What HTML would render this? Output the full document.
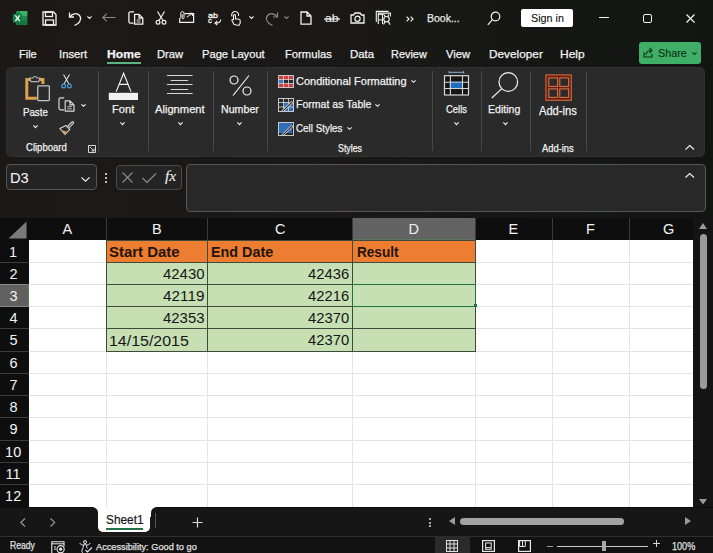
<!DOCTYPE html>
<html><head><meta charset="utf-8"><style>
html,body{margin:0;padding:0;}
body{width:713px;height:553px;overflow:hidden;position:relative;background:#1a1917;font-family:"Liberation Sans",sans-serif;}
svg{overflow:visible}
</style></head><body>
<div style="position:absolute;left:0px;top:0px;width:713px;height:218px;background:linear-gradient(90deg,#1c1815 0%,#1a1918 45%,#161715 75%,#121511 100%);"></div>
<svg style="position:absolute;left:12px;top:10px;" width="17" height="16" viewBox="0 0 17 16"><rect x="4" y="1" width="11.3" height="14.1" rx="1" fill="#1d8a4e"/>
<rect x="8" y="1" width="7.3" height="5" fill="#36b06c"/>
<rect x="4" y="10.5" width="11.3" height="4.6" fill="#17743f"/>
<rect x="0.8" y="3.8" width="9.1" height="8.9" rx="0.8" fill="#157a44"/>
<path d="M3.3 5.4 L7.7 11 M7.7 5.4 L3.3 11" stroke="#f4f4f4" stroke-width="1.3"/></svg>
<svg style="position:absolute;left:42px;top:11px;" width="15" height="15" viewBox="0 0 15 15"><path d="M1 1 H11.5 L14 3.5 V14 H1 Z" fill="none" stroke="#f2f2f2" stroke-width="1.3"/>
<rect x="3.5" y="1" width="7" height="4.5" fill="none" stroke="#f2f2f2" stroke-width="1.3"/>
<rect x="3.5" y="9" width="8" height="5" fill="none" stroke="#f2f2f2" stroke-width="1.3"/></svg>
<svg style="position:absolute;left:68px;top:11px;" width="14" height="15" viewBox="0 0 14 15"><path d="M1.5 1.5 V6 H6" fill="none" stroke="#f2f2f2" stroke-width="1.3"/>
<path d="M1.8 5.8 C4 2.5 9 1.5 11.5 4.5 C13.5 7 12.5 10 10 12.5 L6.5 14.5" fill="none" stroke="#f2f2f2" stroke-width="1.3"/></svg>
<svg style="position:absolute;left:87px;top:16px;" width="5" height="2.8" viewBox="0 0 5 2.8"><path d="M0.4 0.4 L2.5 2.5 L4.6 0.4" fill="none" stroke="#f2f2f2" stroke-width="1.1"/></svg>
<svg style="position:absolute;left:102px;top:13px;" width="14" height="9" viewBox="0 0 14 9"><path d="M0.8 4.5 H13.5 M4.8 0.7 L0.8 4.5 L4.8 8.3" fill="none" stroke="#8a8a8a" stroke-width="1.1"/></svg>
<svg style="position:absolute;left:127.5px;top:11px;" width="16" height="14" viewBox="0 0 16 14"><path d="M6 0.8 H2.4 A1.5 1.5 0 0 0 0.9 2.3 V10.7 A1.5 1.5 0 0 0 2.4 12.2 H5.5" fill="none" stroke="#f2f2f2" stroke-width="1.3"/>
<path d="M6.6 3.4 H11 L14.8 7.2 V13.2 H6.6 Z M11 3.4 V7.2 H14.8" fill="none" stroke="#f2f2f2" stroke-width="1.3" stroke-linejoin="round"/>
<path d="M8.6 9 H12.6 M8.6 11 H12.6" stroke="#f2f2f2" stroke-width="0.9"/></svg>
<svg style="position:absolute;left:155px;top:11px;" width="12" height="14" viewBox="0 0 12 14"><path d="M2.5 0.5 L8 9.5 M9.5 0.5 L4 9.5" stroke="#f2f2f2" stroke-width="1.2"/>
<circle cx="3" cy="11.3" r="1.9" fill="none" stroke="#f2f2f2" stroke-width="1.2"/>
<circle cx="9" cy="11.3" r="1.9" fill="none" stroke="#f2f2f2" stroke-width="1.2"/></svg>
<svg style="position:absolute;left:179px;top:11px;" width="16" height="13" viewBox="0 0 16 13"><path d="M5.5 2.6 H14.6 V11.3 H0.7 V7" fill="none" stroke="#f2f2f2" stroke-width="1.2"/>
<path d="M1.8 7.2 V2.2 A1.6 1.6 0 0 1 5 2.2 V6.8 A0.9 0.9 0 0 1 3.2 6.8 V3.2" fill="none" stroke="#f2f2f2" stroke-width="1"/>
<path d="M7.8 6.2 L13.2 2.4 M10.5 2.3 H13.4 V5" fill="none" stroke="#f2f2f2" stroke-width="1"/></svg>
<div style="position:absolute;left:207.90px;top:11.65px;white-space:pre;line-height:1;font-family:'Liberation Sans', sans-serif;font-size:7.5px;font-weight:400;font-style:normal;color:#f2f2f2;transform:scaleX(1.1993);transform-origin:0 0;-webkit-text-stroke:0.3px #f2f2f2;">ab</div>
<div style="position:absolute;left:207.90px;top:17.15px;white-space:pre;line-height:1;font-family:'Liberation Sans', sans-serif;font-size:7.5px;font-weight:400;font-style:normal;color:#f2f2f2;transform:scaleX(1.0250);transform-origin:0 0;-webkit-text-stroke:0.3px #f2f2f2;">c</div>
<svg style="position:absolute;left:213.5px;top:18.5px;" width="8" height="6" viewBox="0 0 8 6"><path d="M6.8 0.5 C6.8 3 5.5 4.2 1.2 4.2 M3.3 2 L1 4.2 L3.3 6" fill="none" stroke="#f2f2f2" stroke-width="1.1"/></svg>
<svg style="position:absolute;left:230px;top:11px;" width="11" height="15" viewBox="0 0 11 15"><path d="M2 5.5 A3.5 3.5 0 1 1 8.5 5" fill="none" stroke="#f2f2f2" stroke-width="1.1"/>
<path d="M4 13.5 L2 9.5 C1.6 8.5 3 8 3.5 9 V4.5 A1 1 0 0 1 5.5 4.5 V8 H8 C9.5 8 10.2 9 10.2 10 V12 L9 14.5 Z" fill="none" stroke="#f2f2f2" stroke-width="1.1"/></svg>
<svg style="position:absolute;left:249px;top:16px;" width="5" height="2.8" viewBox="0 0 5 2.8"><path d="M0.4 0.4 L2.5 2.5 L4.6 0.4" fill="none" stroke="#f2f2f2" stroke-width="1.1"/></svg>
<svg style="position:absolute;left:265px;top:11px;" width="14" height="15" viewBox="0 0 14 15"><path d="M12.5 1.5 V6 H8" fill="none" stroke="#8a8a8a" stroke-width="1.2"/>
<path d="M12.2 5.8 C10 2.5 5 1.5 2.5 4.5 C0.5 7 1.5 10 4 12.5 L7.5 14.5" fill="none" stroke="#8a8a8a" stroke-width="1.2"/></svg>
<svg style="position:absolute;left:284px;top:16px;" width="5" height="2.8" viewBox="0 0 5 2.8"><path d="M0.4 0.4 L2.5 2.5 L4.6 0.4" fill="none" stroke="#8a8a8a" stroke-width="1.1"/></svg>
<svg style="position:absolute;left:300px;top:11px;" width="12" height="14" viewBox="0 0 12 14"><path d="M1 1 H7 L11 5 V13.2 H1 Z M7 1 V5 H11" fill="none" stroke="#f2f2f2" stroke-width="1.3"/></svg>
<div style="position:absolute;left:324.50px;top:13.19px;white-space:pre;line-height:1;font-family:'Liberation Sans', sans-serif;font-size:11px;font-weight:400;font-style:normal;color:#f2f2f2;transform:scaleX(1.1141);transform-origin:0 0;-webkit-text-stroke:0.1px #f2f2f2;">ab</div>
<svg style="position:absolute;left:323.5px;top:17.5px;" width="16" height="2" viewBox="0 0 16 2"><path d="M0 1 H16" stroke="#f2f2f2" stroke-width="1.2"/></svg>
<svg style="position:absolute;left:350px;top:12px;" width="15" height="12" viewBox="0 0 15 12"><path d="M1 3 H3.5 L5 1 H10 L11.5 3 H14 V11 H1 Z" fill="none" stroke="#f2f2f2" stroke-width="1.3"/>
<circle cx="7.5" cy="6.8" r="2.6" fill="none" stroke="#f2f2f2" stroke-width="1.2"/></svg>
<svg style="position:absolute;left:375px;top:10px;" width="17" height="16" viewBox="0 0 17 16"><path d="M1.3 12 V1.4 H13.6" fill="none" stroke="#f2f2f2" stroke-width="1.1"/>
<path d="M3.3 14 V3.1 H15.4 V6.5" fill="none" stroke="#f2f2f2" stroke-width="1.1"/>
<path d="M3.3 4.6 H8.8 M7.5 4.6 V14 M3.3 9.9 H7.5" fill="none" stroke="#f2f2f2" stroke-width="1"/>
<circle cx="11.5" cy="9.2" r="2.7" fill="none" stroke="#f2f2f2" stroke-width="1.1"/>
<path d="M9.2 4.6 L10.2 6.7 M13.8 4.6 L12.8 6.7 M8.6 14.6 L10 11.6 M15.2 14.6 L13.2 11.6" stroke="#f2f2f2" stroke-width="1.1"/></svg>
<svg style="position:absolute;left:406px;top:16px;" width="8" height="6" viewBox="0 0 8 6"><path d="M0.6 0.6 L3 3 L0.6 5.4 M4.6 0.6 L7 3 L4.6 5.4" fill="none" stroke="#f2f2f2" stroke-width="1.1"/></svg>
<div style="position:absolute;left:427.00px;top:13.27px;white-space:pre;line-height:1;font-family:'Liberation Sans', sans-serif;font-size:11.5px;font-weight:400;font-style:normal;color:#e8e8e8;transform:scaleX(0.9129);transform-origin:0 0;-webkit-text-stroke:0.25px #e8e8e8;">Book...</div>
<svg style="position:absolute;left:487px;top:11px;" width="14" height="15" viewBox="0 0 14 15"><circle cx="8.5" cy="5.5" r="4.3" fill="none" stroke="#f2f2f2" stroke-width="1.2"/>
<path d="M5.5 8.7 L0.8 13.8" stroke="#f2f2f2" stroke-width="1.2"/></svg>
<div style="position:absolute;left:521px;top:9px;width:52px;height:18px;background:#ffffff;border-radius:2px"></div>
<div style="position:absolute;left:530.70px;top:13.27px;white-space:pre;line-height:1;font-family:'Liberation Sans', sans-serif;font-size:11.5px;font-weight:400;font-style:normal;color:#111;transform:scaleX(0.9377);transform-origin:0 0;-webkit-text-stroke:0.1px #111;">Sign in</div>
<div style="position:absolute;left:598.5px;top:17px;width:10.5px;height:1.2px;background:#f2f2f2;"></div>
<div style="position:absolute;left:642.5px;top:13.5px;width:9.5px;height:9.5px;background:transparent;border:1.2px solid #f2f2f2;border-radius:2px;box-sizing:border-box"></div>
<svg style="position:absolute;left:686px;top:13.5px;" width="9" height="9" viewBox="0 0 9 9"><path d="M0.5 0.5 L8.5 8.5 M8.5 0.5 L0.5 8.5" stroke="#f2f2f2" stroke-width="1.2"/></svg>
<div style="position:absolute;left:18.50px;top:48.67px;white-space:pre;line-height:1;font-family:'Liberation Sans', sans-serif;font-size:11.5px;font-weight:400;font-style:normal;color:#f2f2f2;transform:scaleX(0.9540);transform-origin:0 0;-webkit-text-stroke:0.25px #f2f2f2;">File</div>
<div style="position:absolute;left:59.42px;top:48.67px;white-space:pre;line-height:1;font-family:'Liberation Sans', sans-serif;font-size:11.5px;font-weight:400;font-style:normal;color:#f2f2f2;transform:scaleX(0.9802);transform-origin:0 0;-webkit-text-stroke:0.25px #f2f2f2;">Insert</div>
<div style="position:absolute;left:107.30px;top:48.67px;white-space:pre;line-height:1;font-family:'Liberation Sans', sans-serif;font-size:11.5px;font-weight:700;font-style:normal;color:#f2f2f2;transform:scaleX(1.0521);transform-origin:0 0;-webkit-text-stroke:0.25px #f2f2f2;">Home</div>
<div style="position:absolute;left:107px;top:62.3px;width:33.5px;height:1.6px;background:#5eb37e;"></div>
<div style="position:absolute;left:157.00px;top:48.67px;white-space:pre;line-height:1;font-family:'Liberation Sans', sans-serif;font-size:11.5px;font-weight:400;font-style:normal;color:#f2f2f2;transform:scaleX(0.9735);transform-origin:0 0;-webkit-text-stroke:0.25px #f2f2f2;">Draw</div>
<div style="position:absolute;left:202.00px;top:48.67px;white-space:pre;line-height:1;font-family:'Liberation Sans', sans-serif;font-size:11.5px;font-weight:400;font-style:normal;color:#f2f2f2;transform:scaleX(0.9712);transform-origin:0 0;-webkit-text-stroke:0.25px #f2f2f2;">Page Layout</div>
<div style="position:absolute;left:285.00px;top:48.67px;white-space:pre;line-height:1;font-family:'Liberation Sans', sans-serif;font-size:11.5px;font-weight:400;font-style:normal;color:#f2f2f2;transform:scaleX(0.9756);transform-origin:0 0;-webkit-text-stroke:0.25px #f2f2f2;">Formulas</div>
<div style="position:absolute;left:349.70px;top:48.67px;white-space:pre;line-height:1;font-family:'Liberation Sans', sans-serif;font-size:11.5px;font-weight:400;font-style:normal;color:#f2f2f2;transform:scaleX(0.9921);transform-origin:0 0;-webkit-text-stroke:0.25px #f2f2f2;">Data</div>
<div style="position:absolute;left:391.00px;top:48.67px;white-space:pre;line-height:1;font-family:'Liberation Sans', sans-serif;font-size:11.5px;font-weight:400;font-style:normal;color:#f2f2f2;transform:scaleX(0.9505);transform-origin:0 0;-webkit-text-stroke:0.25px #f2f2f2;">Review</div>
<div style="position:absolute;left:445.70px;top:48.67px;white-space:pre;line-height:1;font-family:'Liberation Sans', sans-serif;font-size:11.5px;font-weight:400;font-style:normal;color:#f2f2f2;transform:scaleX(0.9719);transform-origin:0 0;-webkit-text-stroke:0.25px #f2f2f2;">View</div>
<div style="position:absolute;left:488.60px;top:48.67px;white-space:pre;line-height:1;font-family:'Liberation Sans', sans-serif;font-size:11.5px;font-weight:400;font-style:normal;color:#f2f2f2;transform:scaleX(1.0268);transform-origin:0 0;-webkit-text-stroke:0.25px #f2f2f2;">Developer</div>
<div style="position:absolute;left:560.30px;top:48.67px;white-space:pre;line-height:1;font-family:'Liberation Sans', sans-serif;font-size:11.5px;font-weight:400;font-style:normal;color:#f2f2f2;transform:scaleX(1.0406);transform-origin:0 0;-webkit-text-stroke:0.25px #f2f2f2;">Help</div>
<div style="position:absolute;left:639px;top:42px;width:62px;height:22px;background:#3fae66;border-radius:3px"></div>
<svg style="position:absolute;left:643px;top:47px;" width="10" height="11" viewBox="0 0 10 11"><path d="M1 5 V10 H9 V7" fill="none" stroke="#0b2e17" stroke-width="1.1"/>
<path d="M3 8 C3 5 5 3.5 8 3.5 M6.5 1 L9 3.5 L6.5 6" fill="none" stroke="#0b2e17" stroke-width="1.1"/></svg>
<div style="position:absolute;left:658.00px;top:47.77px;white-space:pre;line-height:1;font-family:'Liberation Sans', sans-serif;font-size:11.5px;font-weight:400;font-style:normal;color:#0b2e17;transform:scaleX(0.9409);transform-origin:0 0;-webkit-text-stroke:0.1px #0b2e17;">Share</div>
<svg style="position:absolute;left:692px;top:52px;" width="5" height="2.6" viewBox="0 0 5 2.6"><path d="M0.4 0.4 L2.5 2.3000000000000003 L4.6 0.4" fill="none" stroke="#0b2e17" stroke-width="1.1"/></svg>
<div style="position:absolute;left:6px;top:67px;width:699px;height:90px;background:#2a2a2a;border-radius:6px;box-shadow:inset 0 0 0 1px #313131"></div>
<div style="position:absolute;left:98px;top:71px;width:1px;height:80px;background:#474747;"></div>
<div style="position:absolute;left:147.5px;top:71px;width:1px;height:80px;background:#474747;"></div>
<div style="position:absolute;left:212.5px;top:71px;width:1px;height:80px;background:#474747;"></div>
<div style="position:absolute;left:267px;top:71px;width:1px;height:80px;background:#474747;"></div>
<div style="position:absolute;left:432px;top:71px;width:1px;height:80px;background:#474747;"></div>
<div style="position:absolute;left:480.5px;top:71px;width:1px;height:80px;background:#474747;"></div>
<div style="position:absolute;left:529.5px;top:71px;width:1px;height:80px;background:#474747;"></div>
<div style="position:absolute;left:586px;top:71px;width:1px;height:80px;background:#474747;"></div>
<svg style="position:absolute;left:24px;top:73px;" width="28" height="30" viewBox="0 0 28 30"><path d="M12.8 25.2 H2.8 V6.4 H18.9 V10.9" fill="none" stroke="#dfa24c" stroke-width="3" stroke-linejoin="miter"/>
<path d="M5.8 5 H9 A2.1 2.1 0 0 1 13 5 H16 L14.8 8.6 H7 Z" fill="#2a2a2a" stroke="#b8b8b8" stroke-width="1.1"/>
<rect x="13.75" y="12.85" width="11.6" height="14.8" rx="0.8" fill="#2a2a2a" stroke="#c4c4c4" stroke-width="1.3"/></svg>
<div style="position:absolute;left:22.60px;top:106.69px;white-space:pre;line-height:1;font-family:'Liberation Sans', sans-serif;font-size:11px;font-weight:400;font-style:normal;color:#f2f2f2;transform:scaleX(0.8818);transform-origin:0 0;-webkit-text-stroke:0.25px #f2f2f2;">Paste</div>
<svg style="position:absolute;left:32.5px;top:124.5px;" width="5" height="3" viewBox="0 0 5 3"><path d="M0.4 0.4 L2.5 2.7 L4.6 0.4" fill="none" stroke="#f2f2f2" stroke-width="1.1"/></svg>
<svg style="position:absolute;left:61px;top:74px;" width="11" height="15" viewBox="0 0 11 15"><path d="M2.5 0.5 L8 10 M8.5 0.5 L3 10" stroke="#d8d8d8" stroke-width="1.1"/>
<circle cx="2.6" cy="12" r="1.9" fill="none" stroke="#4a9fe0" stroke-width="1.2"/>
<circle cx="8.4" cy="12" r="1.9" fill="none" stroke="#4a9fe0" stroke-width="1.2"/></svg>
<svg style="position:absolute;left:58px;top:97px;" width="17" height="16" viewBox="0 0 17 16"><path d="M6.2 0.8 H2.5 A1.6 1.6 0 0 0 1 2.4 V11.2 A1.6 1.6 0 0 0 2.5 12.8 H6" fill="none" stroke="#d8d8d8" stroke-width="1.2"/>
<path d="M7.2 3.9 H12 L16 7.9 V14.2 H7.2 Z M12 3.9 V7.9 H16" fill="none" stroke="#d8d8d8" stroke-width="1.2" stroke-linejoin="round"/>
<path d="M9.3 9.7 H13.8 M9.3 11.8 H13.8" stroke="#d8d8d8" stroke-width="0.9"/></svg>
<svg style="position:absolute;left:81px;top:104px;" width="5" height="2.5" viewBox="0 0 5 2.5"><path d="M0.4 0.4 L2.5 2.2 L4.6 0.4" fill="none" stroke="#f2f2f2" stroke-width="1.1"/></svg>
<svg style="position:absolute;left:59px;top:120px;" width="16" height="15" viewBox="0 0 16 15"><path d="M8.5 6.5 L13 2 C13.8 1.2 15.2 2.4 14.4 3.3 L10 7.8" fill="none" stroke="#d8d8d8" stroke-width="1.1"/>
<path d="M7 5.5 L10.8 9.3 L6 14.5 L0.8 8.5 Z" fill="#2a2a2a" stroke="#d8d8d8" stroke-width="1.1" stroke-linejoin="round"/>
<path d="M3.5 10.5 L7.5 11.5 L6 14 L1.2 8.8 Z" fill="#e3a54c"/></svg>
<div style="position:absolute;left:26.30px;top:141.61px;white-space:pre;line-height:1;font-family:'Liberation Sans', sans-serif;font-size:10.5px;font-weight:400;font-style:normal;color:#f2f2f2;transform:scaleX(0.9068);transform-origin:0 0;-webkit-text-stroke:0.25px #f2f2f2;">Clipboard</div>
<svg style="position:absolute;left:87.5px;top:145px;" width="8" height="8" viewBox="0 0 8 8"><path d="M0.5 7.5 V0.5 H7.5 V7.5 Z" fill="none" stroke="#d8d8d8" stroke-width="1"/>
<path d="M2 2 L6 6 M6 3.5 V6 H3.5" fill="none" stroke="#d8d8d8" stroke-width="1"/></svg>
<svg style="position:absolute;left:108px;top:72px;" width="31" height="29" viewBox="0 0 31 29"><path d="M8.2 19.6 L15.6 1.3 L23 19.6 M11 12.3 H20.2" fill="none" stroke="#f2f2f2" stroke-width="1.2"/>
<rect x="0.8" y="20.8" width="29.2" height="7.2" fill="#f2f2f2"/></svg>
<div style="position:absolute;left:112.40px;top:104.39px;white-space:pre;line-height:1;font-family:'Liberation Sans', sans-serif;font-size:11px;font-weight:400;font-style:normal;color:#f2f2f2;transform:scaleX(1.0112);transform-origin:0 0;-webkit-text-stroke:0.25px #f2f2f2;">Font</div>
<svg style="position:absolute;left:120.3px;top:121.5px;" width="5" height="3" viewBox="0 0 5 3"><path d="M0.4 0.4 L2.5 2.7 L4.6 0.4" fill="none" stroke="#f2f2f2" stroke-width="1.1"/></svg>
<svg style="position:absolute;left:167px;top:75px;" width="26" height="20" viewBox="0 0 26 20"><path d="M0 0.5 H25.6 M3.7 5.5 H21.2 M0 9.5 H25.6 M3.7 14.5 H21.2 M0 18.5 H25.6" stroke="#d8d8d8" stroke-width="1"/></svg>
<div style="position:absolute;left:154.90px;top:104.39px;white-space:pre;line-height:1;font-family:'Liberation Sans', sans-serif;font-size:11px;font-weight:400;font-style:normal;color:#f2f2f2;transform:scaleX(1.0152);transform-origin:0 0;-webkit-text-stroke:0.25px #f2f2f2;">Alignment</div>
<svg style="position:absolute;left:177.5px;top:121.5px;" width="5" height="3" viewBox="0 0 5 3"><path d="M0.4 0.4 L2.5 2.7 L4.6 0.4" fill="none" stroke="#f2f2f2" stroke-width="1.1"/></svg>
<svg style="position:absolute;left:228.5px;top:75px;" width="24" height="21" viewBox="0 0 24 21"><circle cx="5" cy="5" r="4" fill="none" stroke="#f2f2f2" stroke-width="1.2"/>
<circle cx="18" cy="16" r="4" fill="none" stroke="#f2f2f2" stroke-width="1.2"/>
<path d="M20 0.5 L4 20.5" stroke="#f2f2f2" stroke-width="1.2"/></svg>
<div style="position:absolute;left:220.50px;top:104.39px;white-space:pre;line-height:1;font-family:'Liberation Sans', sans-serif;font-size:11px;font-weight:400;font-style:normal;color:#f2f2f2;transform:scaleX(0.9681);transform-origin:0 0;-webkit-text-stroke:0.25px #f2f2f2;">Number</div>
<svg style="position:absolute;left:237px;top:121.5px;" width="5" height="3" viewBox="0 0 5 3"><path d="M0.4 0.4 L2.5 2.7 L4.6 0.4" fill="none" stroke="#f2f2f2" stroke-width="1.1"/></svg>
<svg style="position:absolute;left:277.5px;top:75px;" width="16" height="13" viewBox="0 0 16 13"><rect x="1" y="1" width="14" height="3.5" fill="#d63a3a"/>
<rect x="1" y="8.5" width="14" height="3.5" fill="#d63a3a"/>
<rect x="1" y="4.5" width="4.5" height="4" fill="#3f78c8"/>
<rect x="0.5" y="0.5" width="15" height="12" fill="none" stroke="#c8c8c8" stroke-width="1"/>
<path d="M5.5 0.5 V12.5 M10.5 0.5 V12.5 M0.5 4.5 H15.5 M0.5 8.5 H15.5" stroke="#c8c8c8" stroke-width="0.9"/></svg>
<div style="position:absolute;left:296.20px;top:75.87px;white-space:pre;line-height:1;font-family:'Liberation Sans', sans-serif;font-size:11.5px;font-weight:400;font-style:normal;color:#f2f2f2;transform:scaleX(0.9558);transform-origin:0 0;-webkit-text-stroke:0.25px #f2f2f2;">Conditional Formatting</div>
<svg style="position:absolute;left:411px;top:80px;" width="5" height="2.6" viewBox="0 0 5 2.6"><path d="M0.4 0.4 L2.5 2.3000000000000003 L4.6 0.4" fill="none" stroke="#f2f2f2" stroke-width="1.1"/></svg>
<svg style="position:absolute;left:277.5px;top:98px;" width="16" height="14" viewBox="0 0 16 14"><rect x="5.5" y="4.5" width="10" height="9" fill="#2f6fb8"/>
<rect x="0.5" y="0.5" width="15" height="13" fill="none" stroke="#c8c8c8" stroke-width="1"/>
<path d="M5.5 0.5 V13.5 M10.5 0.5 V13.5 M0.5 4.5 H15.5 M0.5 9 H15.5" stroke="#c8c8c8" stroke-width="0.9"/>
<path d="M3.5 13.2 L13.5 3.2 L15 4.5 L5.5 13.5 Z" fill="#2a2a2a" stroke="#d8d8d8" stroke-width="1"/></svg>
<div style="position:absolute;left:296.00px;top:99.27px;white-space:pre;line-height:1;font-family:'Liberation Sans', sans-serif;font-size:11.5px;font-weight:400;font-style:normal;color:#f2f2f2;transform:scaleX(0.9177);transform-origin:0 0;-webkit-text-stroke:0.25px #f2f2f2;">Format as Table</div>
<svg style="position:absolute;left:375px;top:103.5px;" width="5" height="2.6" viewBox="0 0 5 2.6"><path d="M0.4 0.4 L2.5 2.3000000000000003 L4.6 0.4" fill="none" stroke="#f2f2f2" stroke-width="1.1"/></svg>
<svg style="position:absolute;left:277.5px;top:121.5px;" width="16" height="14" viewBox="0 0 16 14"><rect x="1" y="1" width="13" height="10" fill="#2f6fb8"/>
<rect x="0.5" y="0.5" width="15" height="13" fill="none" stroke="#c8c8c8" stroke-width="1"/>
<path d="M3.5 13.2 L13.5 3.2 L15 4.5 L5.5 13.5 Z" fill="#2a2a2a" stroke="#d8d8d8" stroke-width="1"/></svg>
<div style="position:absolute;left:296.00px;top:122.57px;white-space:pre;line-height:1;font-family:'Liberation Sans', sans-serif;font-size:11.5px;font-weight:400;font-style:normal;color:#f2f2f2;transform:scaleX(0.8558);transform-origin:0 0;-webkit-text-stroke:0.25px #f2f2f2;">Cell Styles</div>
<svg style="position:absolute;left:347px;top:127px;" width="5" height="2.6" viewBox="0 0 5 2.6"><path d="M0.4 0.4 L2.5 2.3000000000000003 L4.6 0.4" fill="none" stroke="#f2f2f2" stroke-width="1.1"/></svg>
<div style="position:absolute;left:337.50px;top:142.51px;white-space:pre;line-height:1;font-family:'Liberation Sans', sans-serif;font-size:10.5px;font-weight:400;font-style:normal;color:#f2f2f2;transform:scaleX(0.8397);transform-origin:0 0;-webkit-text-stroke:0.25px #f2f2f2;">Styles</div>
<svg style="position:absolute;left:443px;top:69px;" width="27" height="27" viewBox="0 0 27 27"><path d="M6.2 3.3 H20.7 M6.2 2 V4.6 M20.7 2 V4.6" stroke="#8fb3cc" stroke-width="1"/>
<rect x="1.5" y="6.7" width="24" height="19.3" fill="#161616" stroke="#d8d8d8" stroke-width="1.2"/>
<rect x="7.4" y="13.2" width="12.1" height="6.3" fill="#1f6fc0" stroke="#6ab0ee" stroke-width="1"/>
<path d="M7.4 6.7 V26 M19.5 6.7 V26 M1.5 13.2 H7.4 M19.5 13.2 H25.5 M1.5 19.5 H7.4 M19.5 19.5 H25.5 M7.4 13.2 H19.5 M7.4 19.5 H19.5" stroke="#d8d8d8" stroke-width="1.1"/>
<rect x="7.9" y="13.7" width="11.1" height="5.3" fill="#1f6fc0"/></svg>
<div style="position:absolute;left:445.50px;top:104.39px;white-space:pre;line-height:1;font-family:'Liberation Sans', sans-serif;font-size:11px;font-weight:400;font-style:normal;color:#f2f2f2;transform:scaleX(0.8618);transform-origin:0 0;-webkit-text-stroke:0.25px #f2f2f2;">Cells</div>
<svg style="position:absolute;left:453.5px;top:121.5px;" width="5" height="3" viewBox="0 0 5 3"><path d="M0.4 0.4 L2.5 2.7 L4.6 0.4" fill="none" stroke="#f2f2f2" stroke-width="1.1"/></svg>
<svg style="position:absolute;left:491px;top:72px;" width="28" height="27" viewBox="0 0 28 27"><circle cx="17.3" cy="10" r="9.3" fill="none" stroke="#f2f2f2" stroke-width="1.2"/>
<path d="M10.8 16.6 L0.8 26" stroke="#f2f2f2" stroke-width="1.2"/></svg>
<div style="position:absolute;left:488.40px;top:104.39px;white-space:pre;line-height:1;font-family:'Liberation Sans', sans-serif;font-size:11px;font-weight:400;font-style:normal;color:#f2f2f2;transform:scaleX(0.9607);transform-origin:0 0;-webkit-text-stroke:0.25px #f2f2f2;">Editing</div>
<svg style="position:absolute;left:502.5px;top:121.5px;" width="5" height="3" viewBox="0 0 5 3"><path d="M0.4 0.4 L2.5 2.7 L4.6 0.4" fill="none" stroke="#f2f2f2" stroke-width="1.1"/></svg>
<svg style="position:absolute;left:544.5px;top:73.5px;" width="27" height="27" viewBox="0 0 27 27"><rect x="0.9" y="0.9" width="25.4" height="25.4" fill="#6a1e0c" stroke="#c9643c" stroke-width="1.2"/>
<rect x="3.8" y="3.9" width="8.8" height="8.5" fill="#2e2a29" stroke="#d0704a" stroke-width="1.1"/>
<rect x="14.8" y="3.9" width="8.8" height="8.5" fill="#2e2a29" stroke="#d0704a" stroke-width="1.1"/>
<rect x="3.8" y="14.9" width="8.8" height="8.5" fill="#2e2a29" stroke="#d0704a" stroke-width="1.1"/>
<rect x="14.8" y="14.9" width="8.8" height="8.5" fill="#2e2a29" stroke="#d0704a" stroke-width="1.1"/></svg>
<div style="position:absolute;left:538.50px;top:104.74px;white-space:pre;line-height:1;font-family:'Liberation Sans', sans-serif;font-size:12px;font-weight:400;font-style:normal;color:#f2f2f2;transform:scaleX(0.9266);transform-origin:0 0;-webkit-text-stroke:0.25px #f2f2f2;">Add-ins</div>
<div style="position:absolute;left:541.60px;top:142.51px;white-space:pre;line-height:1;font-family:'Liberation Sans', sans-serif;font-size:10.5px;font-weight:400;font-style:normal;color:#f2f2f2;transform:scaleX(0.8882);transform-origin:0 0;-webkit-text-stroke:0.25px #f2f2f2;">Add-ins</div>
<svg style="position:absolute;left:685px;top:145px;" width="9.5" height="5" viewBox="0 0 9.5 5"><path d="M0.5 4.5 L4.75 0.6 L9 4.5" fill="none" stroke="#f2f2f2" stroke-width="1.1"/></svg>
<div style="position:absolute;left:6px;top:164px;width:91px;height:26px;background:#242424;border:1px solid #555;border-radius:4px;box-sizing:border-box"></div>
<div style="position:absolute;left:9.82px;top:170.10px;white-space:pre;line-height:1;font-family:'Liberation Sans', sans-serif;font-size:15px;font-weight:400;font-style:normal;color:#f2f2f2;transform:scaleX(0.9757);transform-origin:0 0;-webkit-text-stroke:0.05px #f2f2f2;">D3</div>
<svg style="position:absolute;left:81px;top:176.5px;" width="9" height="4.5" viewBox="0 0 9 4.5"><path d="M0.4 0.4 L4.5 4.2 L8.6 0.4" fill="none" stroke="#f2f2f2" stroke-width="1.2"/></svg>
<div style="position:absolute;left:105.3px;top:173px;width:2px;height:2px;background:#f2f2f2;border-radius:1px"></div>
<div style="position:absolute;left:105.3px;top:177px;width:2px;height:2px;background:#f2f2f2;border-radius:1px"></div>
<div style="position:absolute;left:105.3px;top:181px;width:2px;height:2px;background:#f2f2f2;border-radius:1px"></div>
<div style="position:absolute;left:115.5px;top:164.5px;width:66.5px;height:25.5px;background:#242424;border:1px solid #4a4a4a;border-radius:4px;box-sizing:border-box"></div>
<svg style="position:absolute;left:121.5px;top:172px;" width="11" height="11" viewBox="0 0 11 11"><path d="M0.5 0.5 L10.5 10.5 M10.5 0.5 L0.5 10.5" stroke="#8c8c8c" stroke-width="1.1"/></svg>
<svg style="position:absolute;left:141.5px;top:172.5px;" width="14.5" height="10" viewBox="0 0 14.5 10"><path d="M0.5 5 L5 9.5 L14 0.5" fill="none" stroke="#8c8c8c" stroke-width="1.1"/></svg>
<div style="position:absolute;left:164.80px;top:168.50px;white-space:pre;line-height:1;font-family:'Liberation Serif', serif;font-size:15px;font-weight:400;font-style:italic;color:#f2f2f2;transform:scaleX(1.0387);transform-origin:0 0;-webkit-text-stroke:0.1px #f2f2f2;">fx</div>
<div style="position:absolute;left:185.5px;top:164px;width:520px;height:48px;background:#282828;border:1px solid #575757;border-radius:4px;box-sizing:border-box"></div>
<svg style="position:absolute;left:685px;top:173px;" width="9.5" height="5" viewBox="0 0 9.5 5"><path d="M0.5 4.5 L4.75 0.6 L9 4.5" fill="none" stroke="#f2f2f2" stroke-width="1.1"/></svg>
<div style="position:absolute;left:0px;top:218px;width:713px;height:289px;background:#141414;"></div>
<div style="position:absolute;left:0px;top:218px;width:693px;height:22px;background:#0e0e0e;"></div>
<div style="position:absolute;left:0px;top:240px;width:29px;height:267px;background:#0e0e0e;"></div>
<div style="position:absolute;left:29px;top:240px;width:664px;height:267px;background:#ffffff;"></div>
<svg style="position:absolute;left:8px;top:221px;" width="19" height="18" viewBox="0 0 19 18"><path d="M18.5 0.5 V17.5 H0.5 Z" fill="#7a7a7a"/></svg>
<div style="position:absolute;left:352px;top:218px;width:124px;height:22px;background:#636363;"></div>
<div style="position:absolute;left:352px;top:239px;width:124px;height:1px;background:#5b7a5e;"></div>
<div style="position:absolute;left:106px;top:218px;width:1px;height:22px;background:#3a3a3a;"></div>
<div style="position:absolute;left:207px;top:218px;width:1px;height:22px;background:#3a3a3a;"></div>
<div style="position:absolute;left:352px;top:218px;width:1px;height:22px;background:#3a3a3a;"></div>
<div style="position:absolute;left:475px;top:218px;width:1px;height:22px;background:#3a3a3a;"></div>
<div style="position:absolute;left:552px;top:218px;width:1px;height:22px;background:#3a3a3a;"></div>
<div style="position:absolute;left:629px;top:218px;width:1px;height:22px;background:#3a3a3a;"></div>
<div style="position:absolute;left:106px;top:240px;width:1px;height:267px;background:#e4e4e4;"></div>
<div style="position:absolute;left:207px;top:240px;width:1px;height:267px;background:#e4e4e4;"></div>
<div style="position:absolute;left:352px;top:240px;width:1px;height:267px;background:#e4e4e4;"></div>
<div style="position:absolute;left:475px;top:240px;width:1px;height:267px;background:#e4e4e4;"></div>
<div style="position:absolute;left:552px;top:240px;width:1px;height:267px;background:#e4e4e4;"></div>
<div style="position:absolute;left:629px;top:240px;width:1px;height:267px;background:#e4e4e4;"></div>
<div style="position:absolute;left:29px;top:262px;width:664px;height:1px;background:#e4e4e4;"></div>
<div style="position:absolute;left:0px;top:262px;width:29px;height:1px;background:#3c3c3c;"></div>
<div style="position:absolute;left:29px;top:284px;width:664px;height:1px;background:#e4e4e4;"></div>
<div style="position:absolute;left:0px;top:284px;width:29px;height:1px;background:#3c3c3c;"></div>
<div style="position:absolute;left:29px;top:306px;width:664px;height:1px;background:#e4e4e4;"></div>
<div style="position:absolute;left:0px;top:306px;width:29px;height:1px;background:#3c3c3c;"></div>
<div style="position:absolute;left:29px;top:328px;width:664px;height:1px;background:#e4e4e4;"></div>
<div style="position:absolute;left:0px;top:328px;width:29px;height:1px;background:#3c3c3c;"></div>
<div style="position:absolute;left:29px;top:351px;width:664px;height:1px;background:#e4e4e4;"></div>
<div style="position:absolute;left:0px;top:351px;width:29px;height:1px;background:#3c3c3c;"></div>
<div style="position:absolute;left:29px;top:373px;width:664px;height:1px;background:#e4e4e4;"></div>
<div style="position:absolute;left:0px;top:373px;width:29px;height:1px;background:#3c3c3c;"></div>
<div style="position:absolute;left:29px;top:395px;width:664px;height:1px;background:#e4e4e4;"></div>
<div style="position:absolute;left:0px;top:395px;width:29px;height:1px;background:#3c3c3c;"></div>
<div style="position:absolute;left:29px;top:417px;width:664px;height:1px;background:#e4e4e4;"></div>
<div style="position:absolute;left:0px;top:417px;width:29px;height:1px;background:#3c3c3c;"></div>
<div style="position:absolute;left:29px;top:440px;width:664px;height:1px;background:#e4e4e4;"></div>
<div style="position:absolute;left:0px;top:440px;width:29px;height:1px;background:#3c3c3c;"></div>
<div style="position:absolute;left:29px;top:462px;width:664px;height:1px;background:#e4e4e4;"></div>
<div style="position:absolute;left:0px;top:462px;width:29px;height:1px;background:#3c3c3c;"></div>
<div style="position:absolute;left:29px;top:484px;width:664px;height:1px;background:#e4e4e4;"></div>
<div style="position:absolute;left:0px;top:484px;width:29px;height:1px;background:#3c3c3c;"></div>
<div style="position:absolute;left:0px;top:284px;width:29px;height:23px;background:#606060;"></div>
<div style="position:absolute;left:0px;top:284px;width:29px;height:1px;background:#8a8a8a;"></div>
<div style="position:absolute;left:0px;top:306px;width:29px;height:1px;background:#8a8a8a;"></div>
<div style="position:absolute;left:28px;top:284px;width:1px;height:23px;background:#5b7a5e;"></div>
<div style="position:absolute;left:106px;top:240px;width:370px;height:22px;background:#ed7d31;"></div>
<div style="position:absolute;left:106px;top:262px;width:370px;height:89px;background:#c6e0b4;"></div>
<div style="position:absolute;left:106px;top:240px;width:1px;height:112px;background:#3e4a3c;"></div>
<div style="position:absolute;left:207px;top:240px;width:1px;height:112px;background:#3e4a3c;"></div>
<div style="position:absolute;left:352px;top:240px;width:1px;height:112px;background:#3e4a3c;"></div>
<div style="position:absolute;left:475px;top:240px;width:1px;height:112px;background:#3e4a3c;"></div>
<div style="position:absolute;left:106px;top:240px;width:370px;height:1px;background:#3e4a3c;"></div>
<div style="position:absolute;left:106px;top:262px;width:370px;height:1px;background:#3e4a3c;"></div>
<div style="position:absolute;left:106px;top:284px;width:370px;height:1px;background:#3e4a3c;"></div>
<div style="position:absolute;left:106px;top:306px;width:370px;height:1px;background:#3e4a3c;"></div>
<div style="position:absolute;left:106px;top:328px;width:370px;height:1px;background:#3e4a3c;"></div>
<div style="position:absolute;left:106px;top:351px;width:370px;height:1px;background:#3e4a3c;"></div>
<div style="position:absolute;left:352px;top:284px;width:124px;height:1px;background:#217346;"></div>
<div style="position:absolute;left:352px;top:306px;width:124px;height:1px;background:#217346;"></div>
<div style="position:absolute;left:352px;top:284px;width:1px;height:23px;background:#217346;"></div>
<div style="position:absolute;left:475px;top:284px;width:1px;height:23px;background:#217346;"></div>
<div style="position:absolute;left:474px;top:304px;width:3px;height:3px;background:#217346;"></div>
<div style="position:absolute;left:62.50px;top:222.33px;white-space:pre;line-height:1;font-family:'Liberation Sans', sans-serif;font-size:14.5px;font-weight:400;font-style:normal;color:#f2f2f2;">A</div>
<div style="position:absolute;left:152.00px;top:222.33px;white-space:pre;line-height:1;font-family:'Liberation Sans', sans-serif;font-size:14.5px;font-weight:400;font-style:normal;color:#f2f2f2;">B</div>
<div style="position:absolute;left:275.00px;top:222.33px;white-space:pre;line-height:1;font-family:'Liberation Sans', sans-serif;font-size:14.5px;font-weight:400;font-style:normal;color:#f2f2f2;">C</div>
<div style="position:absolute;left:408.50px;top:222.33px;white-space:pre;line-height:1;font-family:'Liberation Sans', sans-serif;font-size:14.5px;font-weight:400;font-style:normal;color:#f2f2f2;">D</div>
<div style="position:absolute;left:508.50px;top:222.33px;white-space:pre;line-height:1;font-family:'Liberation Sans', sans-serif;font-size:14.5px;font-weight:400;font-style:normal;color:#f2f2f2;">E</div>
<div style="position:absolute;left:586.00px;top:222.33px;white-space:pre;line-height:1;font-family:'Liberation Sans', sans-serif;font-size:14.5px;font-weight:400;font-style:normal;color:#f2f2f2;">F</div>
<div style="position:absolute;left:663.00px;top:222.33px;white-space:pre;line-height:1;font-family:'Liberation Sans', sans-serif;font-size:14.5px;font-weight:400;font-style:normal;color:#f2f2f2;">G</div>
<div style="position:absolute;left:9.10px;top:245.13px;white-space:pre;line-height:1;font-family:'Liberation Sans', sans-serif;font-size:14.5px;font-weight:400;font-style:normal;color:#f2f2f2;">1</div>
<div style="position:absolute;left:9.60px;top:267.13px;white-space:pre;line-height:1;font-family:'Liberation Sans', sans-serif;font-size:14.5px;font-weight:400;font-style:normal;color:#f2f2f2;">2</div>
<div style="position:absolute;left:9.60px;top:289.13px;white-space:pre;line-height:1;font-family:'Liberation Sans', sans-serif;font-size:14.5px;font-weight:400;font-style:normal;color:#f2f2f2;">3</div>
<div style="position:absolute;left:9.60px;top:311.13px;white-space:pre;line-height:1;font-family:'Liberation Sans', sans-serif;font-size:14.5px;font-weight:400;font-style:normal;color:#f2f2f2;">4</div>
<div style="position:absolute;left:9.60px;top:333.13px;white-space:pre;line-height:1;font-family:'Liberation Sans', sans-serif;font-size:14.5px;font-weight:400;font-style:normal;color:#f2f2f2;">5</div>
<div style="position:absolute;left:9.60px;top:356.13px;white-space:pre;line-height:1;font-family:'Liberation Sans', sans-serif;font-size:14.5px;font-weight:400;font-style:normal;color:#f2f2f2;">6</div>
<div style="position:absolute;left:9.60px;top:378.13px;white-space:pre;line-height:1;font-family:'Liberation Sans', sans-serif;font-size:14.5px;font-weight:400;font-style:normal;color:#f2f2f2;">7</div>
<div style="position:absolute;left:9.60px;top:400.13px;white-space:pre;line-height:1;font-family:'Liberation Sans', sans-serif;font-size:14.5px;font-weight:400;font-style:normal;color:#f2f2f2;">8</div>
<div style="position:absolute;left:9.60px;top:422.13px;white-space:pre;line-height:1;font-family:'Liberation Sans', sans-serif;font-size:14.5px;font-weight:400;font-style:normal;color:#f2f2f2;">9</div>
<div style="position:absolute;left:5.07px;top:445.13px;white-space:pre;line-height:1;font-family:'Liberation Sans', sans-serif;font-size:14.5px;font-weight:400;font-style:normal;color:#f2f2f2;">10</div>
<div style="position:absolute;left:5.61px;top:467.13px;white-space:pre;line-height:1;font-family:'Liberation Sans', sans-serif;font-size:14.5px;font-weight:400;font-style:normal;color:#f2f2f2;">11</div>
<div style="position:absolute;left:5.07px;top:489.13px;white-space:pre;line-height:1;font-family:'Liberation Sans', sans-serif;font-size:14.5px;font-weight:400;font-style:normal;color:#f2f2f2;">12</div>
<div style="position:absolute;left:108.80px;top:245.05px;white-space:pre;line-height:1;font-family:'Liberation Sans', sans-serif;font-size:14px;font-weight:700;font-style:normal;color:#24140a;transform:scaleX(1.0656);transform-origin:0 0;">Start Date</div>
<div style="position:absolute;left:211.20px;top:245.05px;white-space:pre;line-height:1;font-family:'Liberation Sans', sans-serif;font-size:14px;font-weight:700;font-style:normal;color:#24140a;transform:scaleX(1.0248);transform-origin:0 0;">End Date</div>
<div style="position:absolute;left:356.70px;top:245.05px;white-space:pre;line-height:1;font-family:'Liberation Sans', sans-serif;font-size:14px;font-weight:700;font-style:normal;color:#24140a;transform:scaleX(0.9693);transform-origin:0 0;">Result</div>
<div style="position:absolute;left:163.00px;top:266.83px;white-space:pre;line-height:1;font-family:'Liberation Sans', sans-serif;font-size:14.5px;font-weight:400;font-style:normal;color:#161616;transform:scaleX(1.0284);transform-origin:0 0;">42430</div>
<div style="position:absolute;left:163.00px;top:288.83px;white-space:pre;line-height:1;font-family:'Liberation Sans', sans-serif;font-size:14.5px;font-weight:400;font-style:normal;color:#161616;transform:scaleX(1.0566);transform-origin:0 0;">42119</div>
<div style="position:absolute;left:163.00px;top:310.83px;white-space:pre;line-height:1;font-family:'Liberation Sans', sans-serif;font-size:14.5px;font-weight:400;font-style:normal;color:#161616;transform:scaleX(1.0284);transform-origin:0 0;">42353</div>
<div style="position:absolute;left:108.56px;top:333.75px;white-space:pre;line-height:1;font-family:'Liberation Sans', sans-serif;font-size:14px;font-weight:400;font-style:normal;color:#161616;transform:scaleX(1.1388);transform-origin:0 0;">14/15/2015</div>
<div style="position:absolute;left:308.20px;top:266.83px;white-space:pre;line-height:1;font-family:'Liberation Sans', sans-serif;font-size:14.5px;font-weight:400;font-style:normal;color:#161616;transform:scaleX(1.0209);transform-origin:0 0;">42436</div>
<div style="position:absolute;left:308.20px;top:288.83px;white-space:pre;line-height:1;font-family:'Liberation Sans', sans-serif;font-size:14.5px;font-weight:400;font-style:normal;color:#161616;transform:scaleX(1.0209);transform-origin:0 0;">42216</div>
<div style="position:absolute;left:308.20px;top:310.83px;white-space:pre;line-height:1;font-family:'Liberation Sans', sans-serif;font-size:14.5px;font-weight:400;font-style:normal;color:#161616;transform:scaleX(1.0209);transform-origin:0 0;">42370</div>
<div style="position:absolute;left:308.20px;top:333.33px;white-space:pre;line-height:1;font-family:'Liberation Sans', sans-serif;font-size:14.5px;font-weight:400;font-style:normal;color:#161616;transform:scaleX(1.0209);transform-origin:0 0;">42370</div>
<svg style="position:absolute;left:699px;top:223px;" width="8" height="6" viewBox="0 0 8 6"><path d="M4 0 L8 6 H0 Z" fill="#9a9a9a"/></svg>
<div style="position:absolute;left:699.6px;top:234px;width:7px;height:155px;background:#9a9a9a;border-radius:3.5px"></div>
<svg style="position:absolute;left:699.3px;top:498.5px;" width="8" height="5.5" viewBox="0 0 8 5.5"><path d="M0 0 H8 L4 5.5 Z" fill="#9a9a9a"/></svg>
<div style="position:absolute;left:80px;top:507px;width:90px;height:10px;background:#ffffff;"></div>
<div style="position:absolute;left:0px;top:507px;width:98.3px;height:29px;background:#161617;border-top-right-radius:6px;border-top:1px solid #0a0a0a;box-sizing:border-box"></div>
<div style="position:absolute;left:150.5px;top:507px;width:562.5px;height:29px;background:#161617;border-top-left-radius:6px;border-top:1px solid #0a0a0a;box-sizing:border-box"></div>
<div style="position:absolute;left:98.3px;top:507px;width:52.2px;height:25px;background:#ffffff;border-radius:0 0 5px 5px"></div>
<div style="position:absolute;left:105.70px;top:513.30px;white-space:pre;line-height:1;font-family:'Liberation Sans', sans-serif;font-size:13px;font-weight:400;font-style:normal;color:#161616;transform:scaleX(0.9104);transform-origin:0 0;-webkit-text-stroke:0.2px #161616;">Sheet1</div>
<div style="position:absolute;left:106px;top:528px;width:37px;height:2px;background:#217346;"></div>
<svg style="position:absolute;left:20px;top:518px;" width="5.5" height="9" viewBox="0 0 5.5 9"><path d="M5 0.5 L0.8 4.5 L5 8.5" fill="none" stroke="#9a9a9a" stroke-width="1.1"/></svg>
<svg style="position:absolute;left:50px;top:518px;" width="5.5" height="9" viewBox="0 0 5.5 9"><path d="M0.5 0.5 L4.7 4.5 L0.5 8.5" fill="none" stroke="#9a9a9a" stroke-width="1.1"/></svg>
<div style="position:absolute;left:154.5px;top:513px;width:1px;height:15px;background:#555;"></div>
<svg style="position:absolute;left:191.5px;top:517px;" width="11" height="11" viewBox="0 0 11 11"><path d="M5.5 0.5 V10.5 M0.5 5.5 H10.5" stroke="#d8d8d8" stroke-width="1.2"/></svg>
<div style="position:absolute;left:429px;top:518px;width:2px;height:2px;background:#d8d8d8;border-radius:1px"></div>
<div style="position:absolute;left:429px;top:521.5px;width:2px;height:2px;background:#d8d8d8;border-radius:1px"></div>
<div style="position:absolute;left:429px;top:525px;width:2px;height:2px;background:#d8d8d8;border-radius:1px"></div>
<svg style="position:absolute;left:449px;top:517px;" width="6" height="8" viewBox="0 0 6 8"><path d="M6 0 V8 L0 4 Z" fill="#9a9a9a"/></svg>
<div style="position:absolute;left:460px;top:517.5px;width:164px;height:7.5px;background:#a3a3a3;border-radius:3.75px"></div>
<svg style="position:absolute;left:685px;top:517px;" width="6" height="8" viewBox="0 0 6 8"><path d="M0 0 V8 L6 4 Z" fill="#9a9a9a"/></svg>
<div style="position:absolute;left:0px;top:536px;width:713px;height:17px;background:#121212;"></div>
<div style="position:absolute;left:0px;top:536px;width:713px;height:1px;background:#303030;"></div>
<div style="position:absolute;left:9.50px;top:541.33px;white-space:pre;line-height:1;font-family:'Liberation Sans', sans-serif;font-size:10px;font-weight:400;font-style:normal;color:#e0e0e0;transform:scaleX(0.8614);transform-origin:0 0;-webkit-text-stroke:0.25px #e0e0e0;">Ready</div>
<svg style="position:absolute;left:50.5px;top:540.5px;" width="15" height="14" viewBox="0 0 15 14"><path d="M6 12.5 H0.8 V0.8 H13 V5.5" fill="none" stroke="#e8e8e8" stroke-width="1.1"/>
<path d="M0.8 2.8 H13" stroke="#e8e8e8" stroke-width="1"/>
<path d="M3 6 H5 M3 8.2 H5" stroke="#e8e8e8" stroke-width="1"/>
<circle cx="9.6" cy="8.2" r="3.6" fill="#141414" stroke="#e8e8e8" stroke-width="1.1"/>
<circle cx="9.6" cy="8.2" r="1.6" fill="#e8e8e8"/></svg>
<svg style="position:absolute;left:79px;top:540px;" width="15" height="14" viewBox="0 0 15 14"><circle cx="6" cy="2" r="1.5" fill="none" stroke="#e8e8e8" stroke-width="1"/>
<path d="M0.8 3 C1.5 5 3.5 5 4.5 4.8 H7.5 C8.5 5 10.5 5 11.2 3" fill="none" stroke="#e8e8e8" stroke-width="1"/>
<path d="M4.3 5 C4.5 7 4 8 2.8 10.5 L3.5 12.8 M7.8 5 C7.5 6.5 7.5 7.5 8.5 8.5" fill="none" stroke="#e8e8e8" stroke-width="1"/>
<path d="M6.5 10 L8.4 12 L13 7.5" fill="none" stroke="#e8e8e8" stroke-width="1.1"/></svg>
<div style="position:absolute;left:96.40px;top:541.86px;white-space:pre;line-height:1;font-family:'Liberation Sans', sans-serif;font-size:9.5px;font-weight:400;font-style:normal;color:#e0e0e0;transform:scaleX(0.9688);transform-origin:0 0;-webkit-text-stroke:0.25px #e0e0e0;">Accessibility: Good to go</div>
<div style="position:absolute;left:435px;top:536px;width:35px;height:17px;background:#2b2b2b;"></div>
<svg style="position:absolute;left:446px;top:540px;" width="12" height="12" viewBox="0 0 12 12"><rect x="0.5" y="0.5" width="11" height="11" fill="none" stroke="#e0e0e0" stroke-width="1"/>
<path d="M4 0.5 V11.5 M8 0.5 V11.5 M0.5 4 H11.5 M0.5 8 H11.5" stroke="#e0e0e0" stroke-width="1"/></svg>
<svg style="position:absolute;left:482px;top:540px;" width="13" height="12" viewBox="0 0 13 12"><rect x="0.6" y="0.6" width="11.8" height="10.8" fill="none" stroke="#e8e8e8" stroke-width="1.2"/>
<rect x="3.6" y="3" width="5.6" height="6.3" fill="none" stroke="#e8e8e8" stroke-width="1"/>
<path d="M4 7.6 H8.8" stroke="#e8e8e8" stroke-width="1"/></svg>
<svg style="position:absolute;left:518px;top:540px;" width="13" height="12" viewBox="0 0 13 12"><rect x="0.6" y="0.6" width="11.8" height="10.8" fill="none" stroke="#e8e8e8" stroke-width="1.2"/>
<path d="M1.6 0.6 V6.5 H7.3 V0.6 M4.5 0.6 V6" fill="none" stroke="#e8e8e8" stroke-width="1"/></svg>
<div style="position:absolute;left:547px;top:545.5px;width:6px;height:1px;background:#9a9a9a;"></div>
<div style="position:absolute;left:557px;top:545.5px;width:91px;height:1px;background:#c8c8c8;"></div>
<div style="position:absolute;left:602px;top:541px;width:4px;height:10px;background:#a8a8a8;"></div>
<svg style="position:absolute;left:653px;top:540px;" width="7" height="7" viewBox="0 0 7 7"><path d="M3.5 0 V7 M0 3.5 H7" stroke="#d8d8d8" stroke-width="1"/></svg>
<div style="position:absolute;left:671.60px;top:540.69px;white-space:pre;line-height:1;font-family:'Liberation Sans', sans-serif;font-size:11px;font-weight:400;font-style:normal;color:#e0e0e0;transform:scaleX(0.8253);transform-origin:0 0;-webkit-text-stroke:0.25px #e0e0e0;">100%</div>
</body></html>
